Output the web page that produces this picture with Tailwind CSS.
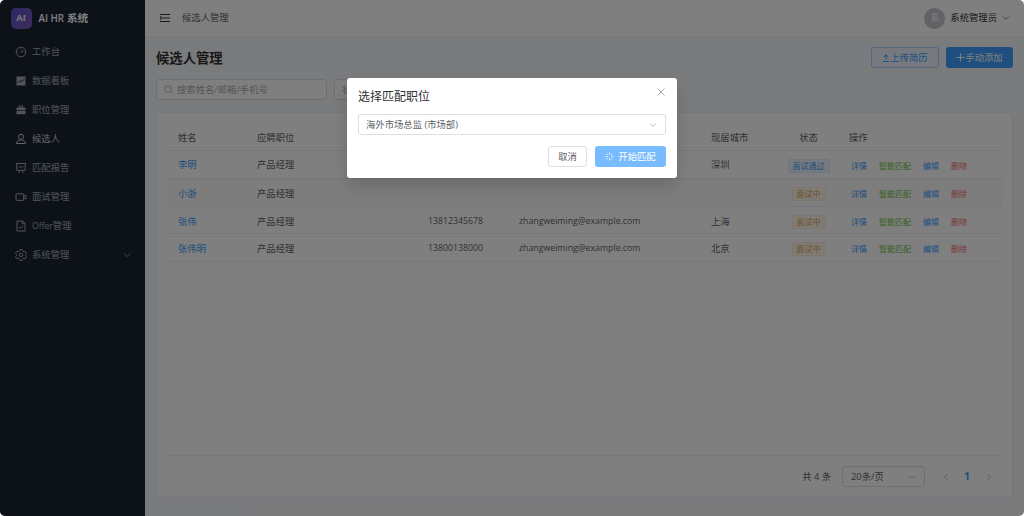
<!doctype html>
<html lang="en">
<head>
<meta charset="UTF-8">
<title>候选人管理</title>
<script src="https://cdn.jsdelivr.net/npm/@tailwindcss/browser@4"></script>
</head>
<body class="bg-white">
<div class="relative flex w-[1024px] h-[516px] overflow-hidden rounded-[5px] text-[9.33px] text-[#606266] font-['Open_Sans','Noto_Sans_CJK_SC',sans-serif]">

  <!-- sidebar -->
  <aside class="w-[145px] shrink-0 bg-[#1a2433] text-[#a3aab5]">
    <div class="flex items-center h-[37px] pl-[10.5px] gap-[7px] border-b border-[#222d3d]">
      <div class="w-[21px] h-[21px] rounded-[5px] bg-gradient-to-br from-[#5a52c8] to-[#7a5bb8] flex items-center justify-center text-white/90 font-bold text-[9.33px]">AI</div>
      <span class="text-white font-semibold text-[10.67px]"><span class="text-[9.8px]">AI HR</span> 系统</span>
    </div>
    <nav>
      <a class="flex items-center h-[29px] pl-[15px] gap-[5px]">
        <svg class="w-[12px] h-[12px]" viewBox="0 0 12 12" fill="none" stroke="currentColor"><circle cx="6" cy="6" r="4.800"/><path d="M6 7l1.600-3.200M6 2.400v.8M2.600 6h.8M8.600 6h.8"/></svg>
        <span>工作台</span>
      </a>
      <a class="flex items-center h-[29px] pl-[15px] gap-[5px]">
        <svg class="w-[12px] h-[12px]" viewBox="0 0 12 12"><path fill="currentColor" d="M1.500 1.500h9v9h-9z"/><path fill="none" stroke="#1a2433" d="M2.500 8l2.400-2.400 1.500 1.200L9.500 4"/></svg>
        <span>数据看板</span>
      </a>
      <a class="flex items-center h-[29px] pl-[15px] gap-[5px]">
        <svg class="w-[12px] h-[12px]" viewBox="0 0 12 12"><path fill="currentColor" d="M4 1.500h4V3.500h2.500v2.700h-9V3.500H4zM5 2.500v1h2v-1zM1.500 7h9v3.200h-9z"/></svg>
        <span>职位管理</span>
      </a>
      <a class="flex items-center h-[29px] pl-[15px] gap-[5px] text-[#c4c8ce]">
        <svg class="w-[12px] h-[12px]" viewBox="0 0 12 12" fill="none" stroke="currentColor"><circle cx="6" cy="3.800" r="2.500"/><path d="M1.500 10.500c.3-2.400 2-3.600 4.500-3.600s4.200 1.200 4.500 3.600z"/></svg>
        <span>候选人</span>
      </a>
      <a class="flex items-center h-[29px] pl-[15px] gap-[5px]">
        <svg class="w-[12px] h-[12px]" viewBox="0 0 12 12" fill="none" stroke="currentColor"><path d="M1 1.500h10M1.800 1.500v6.800h8.400V1.500M4.800 8.300l-1 2.600M7.200 8.300l1 2.600M4 6l1.500-1.500L7 5.500l1.200-1.400"/></svg>
        <span>匹配报告</span>
      </a>
      <a class="flex items-center h-[29px] pl-[15px] gap-[5px]">
        <svg class="w-[12px] h-[12px]" viewBox="0 0 12 12" fill="none" stroke="currentColor"><rect x="1" y="2.800" width="7.600" height="6.600" rx=".6"/><path d="M8.600 5.200l2.400-1v3.800l-2.400-1"/></svg>
        <span>面试管理</span>
      </a>
      <a class="flex items-center h-[29px] pl-[15px] gap-[5px]">
        <svg class="w-[12px] h-[12px]" viewBox="0 0 12 12" fill="none" stroke="currentColor"><path d="M2 1h5.500L10 3.500V11H2zM7.300 1v2.700H10M4 7l1.500 1.500L8 5.800"/></svg>
        <span><span class="text-[8.6px]">Offer</span>管理</span>
      </a>
      <a class="flex items-center h-[29px] pl-[15px] pr-[14px] gap-[5px]">
        <svg class="w-[12px] h-[12px]" viewBox="0 0 12 12" fill="none" stroke="currentColor" stroke-width=".9"><path d="M4.900 1h2.200l.4 1.500 1.400.8 1.500-.4 1.100 1.900-1.100 1.100v1.200l1.100 1.100-1.100 1.900-1.500-.4-1.400.8-.4 1.500H4.900l-.4-1.500-1.400-.8-1.500.4-1.100-1.900 1.100-1.100V5.900L.5 4.800l1.100-1.900 1.500.4 1.400-.8z" transform="translate(0 -.5)"/><circle cx="6" cy="6" r="1.800"/></svg>
        <span>系统管理</span>
        <svg class="w-[8px] h-[8px] ml-auto" viewBox="0 0 8 8" fill="none" stroke="currentColor" stroke-width=".8"><path d="M1 2.500l3 3 3-3"/></svg>
      </a>
    </nav>
  </aside>

  <!-- main -->
  <div class="flex-1 flex flex-col bg-[#f5f6f8] min-w-0">
    <header class="h-[37px] bg-white border-b border-[#eceef2] flex items-center pl-[15px] pr-[14px]">
      <svg class="w-[10px] h-[10px] text-[#303133]" viewBox="0 0 10 10" fill="none" stroke="currentColor" stroke-width="1.100"><path d="M0 1.500h10M3 5h7M0 8.500h10M0 3.500L2 5 0 6.500"/></svg>
      <span class="ml-[12px]">候选人管理</span>
      <div class="ml-auto flex items-center">
        <div class="w-[21px] h-[21px] rounded-full bg-[#c0c4cc] text-white flex items-center justify-center">系</div>
        <span class="ml-[5px] text-[#303133]">系统管理员</span>
        <svg class="w-[8px] h-[8px] ml-[5px]" viewBox="0 0 8 8" fill="none" stroke="currentColor" stroke-width=".8"><path d="M1 2.500l3 3 3-3"/></svg>
      </div>
    </header>

    <main class="flex-1 flex flex-col pl-[11px] pr-[11px] pt-[10px] pb-[18px] min-h-0">
      <div class="flex items-center justify-between h-[21px]">
        <h1 class="text-[13.33px] font-semibold text-[#303133] pt-[2px]">候选人管理</h1>
        <div class="flex gap-[7px]">
          <button class="w-[68px] h-[21px] rounded-[3px] border border-[#a0cfff] bg-[#ecf5ff] text-[#409eff] flex items-center justify-center">
            <svg class="w-[8px] h-[8px]" viewBox="0 0 8 8" fill="none" stroke="currentColor"><path d="M4 6V1M1.800 3L4 .8 6.200 3M1 7.500h6"/></svg>
            上传简历</button>
          <button class="w-[67px] h-[21px] rounded-[3px] bg-[#409eff] text-white flex items-center justify-center">
            <svg class="w-[9px] h-[9px]" viewBox="0 0 9 9" fill="none" stroke="currentColor"><path d="M4.500 .5v8M.5 4.500h8"/></svg>
            手动添加</button>
        </div>
      </div>

      <div class="flex gap-[7px] mt-[11px]">
        <div class="w-[171px] h-[21px] rounded-[3px] bg-white border border-[#dcdfe6] flex items-center pl-[7px] text-[#a8abb2]">
          <svg class="w-[9px] h-[9px] mr-[4px]" viewBox="0 0 9 9" fill="none" stroke="currentColor" stroke-width=".8"><circle cx="4" cy="4" r="3.300"/><path d="M6.500 6.500l2 2"/></svg>
          搜索姓名/邮箱/手机号
        </div>
        <div class="w-[120px] h-[21px] rounded-[3px] bg-white border border-[#dcdfe6] flex items-center pl-[7px] text-[#a8abb2]">状态筛选</div>
      </div>

      <section class="flex-1 flex flex-col mt-[12px] bg-white border border-[#ebeef5] rounded-[3px] pt-[11px] px-[10px] min-h-0">
        <table class="w-full table-fixed text-left">
          <colgroup>
            <col class="w-[79px]"><col class="w-[171px]"><col class="w-[91px]"><col class="w-[192px]"><col class="w-[77px]"><col class="w-[63px]"><col>
          </colgroup>
          <thead>
            <tr class="h-[26px] border-b border-[#ebeef5]">
              <th class="pl-[11px] pt-[2px] font-normal">姓名</th><th class="pl-[11px] pt-[2px] font-normal">应聘职位</th><th class="pl-[11px] pt-[2px] font-normal">手机号</th><th class="pl-[11px] pt-[2px] font-normal">邮箱</th><th class="pl-[11px] pt-[2px] font-normal">现居城市</th><th class="text-center pt-[2px] font-normal">状态</th><th class="pl-[9px] pt-[2px] font-normal">操作</th>
            </tr>
          </thead>
          <tbody>
            <tr class="h-[28px] border-b border-[#ebeef5]">
              <td class="pl-[11px] pt-[2px] text-[#409eff]">李明</td><td class="pl-[11px] pt-[2px]">产品经理</td><td class="pl-[11px]"></td><td class="pl-[11px]"></td><td class="pl-[11px] pt-[2px]">深圳</td>
              <td class="text-center pt-[3px]"><span class="inline-block h-[14px] leading-[12px] text-[8px] px-[4px] rounded-[2px] border border-[#d9ecff] bg-[#ecf5ff] text-[#409eff]">面试通过</span></td>
              <td class="pl-[11px] pt-[3px] text-[8px]"><div class="flex gap-[12px]"><span class="text-[#409eff]">详情</span><span class="text-[#67c23a]">智能匹配</span><span class="text-[#409eff]">编辑</span><span class="text-[#f56c6c]">删除</span></div></td>
            </tr>
            <tr class="h-[28px] border-b border-[#ebeef5] bg-[#fafafa]">
              <td class="pl-[11px] pt-[4px] text-[#409eff]">小浙</td><td class="pl-[11px] pt-[4px]">产品经理</td><td class="pl-[11px]"></td><td class="pl-[11px]"></td><td class="pl-[11px]"></td>
              <td class="text-center pt-[3px]"><span class="inline-block h-[14px] leading-[12px] text-[8px] px-[4px] rounded-[2px] border border-[#faecd8] bg-[#fdf6ec] text-[#e6a23c]">面试中</span></td>
              <td class="pl-[11px] pt-[3px] text-[8px]"><div class="flex gap-[12px]"><span class="text-[#409eff]">详情</span><span class="text-[#67c23a]">智能匹配</span><span class="text-[#409eff]">编辑</span><span class="text-[#f56c6c]">删除</span></div></td>
            </tr>
            <tr class="h-[27px] border-b border-[#ebeef5]">
              <td class="pl-[11px] pt-[4px] text-[#409eff]">张伟</td><td class="pl-[11px] pt-[4px]">产品经理</td><td class="pl-[11px] pt-[4px] text-[8.75px]">13812345678</td><td class="pl-[11px] pt-[4px] text-[8.75px]">zhangweiming@example.com</td><td class="pl-[11px] pt-[4px]">上海</td>
              <td class="text-center pt-[5px]"><span class="inline-block h-[14px] leading-[12px] text-[8px] px-[4px] rounded-[2px] border border-[#faecd8] bg-[#fdf6ec] text-[#e6a23c]">面试中</span></td>
              <td class="pl-[11px] pt-[5px] text-[8px]"><div class="flex gap-[12px]"><span class="text-[#409eff]">详情</span><span class="text-[#67c23a]">智能匹配</span><span class="text-[#409eff]">编辑</span><span class="text-[#f56c6c]">删除</span></div></td>
            </tr>
            <tr class="h-[28px] border-b border-[#ebeef5]">
              <td class="pl-[11px] pt-[4px] text-[#409eff]">张伟明</td><td class="pl-[11px] pt-[4px]">产品经理</td><td class="pl-[11px] pt-[4px] text-[8.75px]">13800138000</td><td class="pl-[11px] pt-[4px] text-[8.75px]">zhangweiming@example.com</td><td class="pl-[11px] pt-[4px]">北京</td>
              <td class="text-center pt-[3px]"><span class="inline-block h-[14px] leading-[12px] text-[8px] px-[4px] rounded-[2px] border border-[#faecd8] bg-[#fdf6ec] text-[#e6a23c]">面试中</span></td>
              <td class="pl-[11px] pt-[3px] text-[8px]"><div class="flex gap-[12px]"><span class="text-[#409eff]">详情</span><span class="text-[#67c23a]">智能匹配</span><span class="text-[#409eff]">编辑</span><span class="text-[#f56c6c]">删除</span></div></td>
            </tr>
          </tbody>
        </table>

        <div class="mt-auto h-[42px] border-t border-[#ebeef5] flex items-center justify-end pr-[9px]">
          <span>共 4 条</span>
          <div class="ml-[11px] w-[83px] h-[21px] rounded-[3px] border border-[#dcdfe6] flex items-center justify-between px-[8px]">
            <span>20条/页</span>
            <svg class="w-[8px] h-[8px] text-[#a8abb2]" viewBox="0 0 8 8" fill="none" stroke="currentColor" stroke-width=".8"><path d="M1 2.500l3 3 3-3"/></svg>
          </div>
          <svg class="w-[8px] h-[8px] ml-[17px] text-[#a8abb2]" viewBox="0 0 8 8" fill="none" stroke="currentColor" stroke-width=".8"><path d="M5.500 1l-3 3 3 3"/></svg>
          <span class="ml-[14px] font-bold text-[10.5px] text-[#409eff]">1</span>
          <svg class="w-[8px] h-[8px] ml-[15px] text-[#a8abb2]" viewBox="0 0 8 8" fill="none" stroke="currentColor" stroke-width=".8"><path d="M2.500 1l3 3-3 3"/></svg>
        </div>
      </section>
    </main>
  </div>

  <!-- modal overlay -->
  <div class="absolute inset-0 bg-black/50">
    <div class="absolute left-[347px] top-[78px] w-[330px] h-[100px] bg-white rounded-[3px] shadow-[0_8px_16px_rgba(0,0,0,0.15)] pl-[11px] pr-[11px] pt-[10px]">
      <div class="flex items-start justify-between">
        <h2 class="text-[12px] leading-[17px] text-[#303133]">选择匹配职位</h2>
        <svg class="w-[8px] h-[8px] mr-[1px] text-[#909399]" viewBox="0 0 8 8" fill="none" stroke="currentColor" stroke-width=".8"><path d="M.5.5l7 7M7.500.5l-7 7"/></svg>
      </div>
      <div class="mt-[9px] h-[21px] rounded-[3px] border border-[#dcdfe6] flex items-center justify-between pl-[7px] pr-[8px]">
        <span>海外市场总监 (市场部)</span>
        <svg class="w-[8px] h-[8px] text-[#a8abb2]" viewBox="0 0 8 8" fill="none" stroke="currentColor" stroke-width=".8"><path d="M1 2.500l3 3 3-3"/></svg>
      </div>
      <div class="flex justify-end gap-[8px] mt-[11px]">
        <button class="w-[39px] h-[21px] rounded-[3px] border border-[#dcdfe6] text-[#606266]">取消</button>
        <button class="w-[71px] h-[21px] rounded-[3px] bg-[#79bbff] text-white flex items-center justify-center gap-[4px]">
          <svg class="w-[9px] h-[9px]" viewBox="0 0 9 9" fill="none" stroke="currentColor" stroke-width=".8"><path d="M4.500 .5v2M4.500 6.500v2M.5 4.500h2M6.500 4.500h2M1.700 1.700l1.400 1.400M5.900 5.900l1.400 1.400M1.700 7.300l1.400-1.400M5.900 3.100l1.400-1.400"/></svg>
          开始匹配</button>
      </div>
    </div>
  </div>
</div>
</body>
</html>
